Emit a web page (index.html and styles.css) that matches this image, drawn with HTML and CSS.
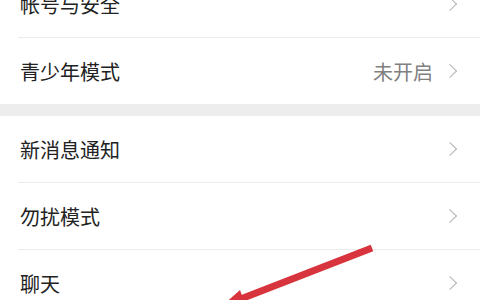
FILE: index.html
```html
<!DOCTYPE html>
<html lang="zh-CN">
<head>
    <meta charset="UTF-8">
    <meta name="viewport" content="width=device-width, initial-scale=1.0">
    <title>设置</title>
    <link rel="stylesheet" href="styles.css">
</head>
<body>
    <div class="settings">
        <div class="group">
            <div class="row">
                <span class="label">帐号与安全</span>
                <span class="chevron"></span>
            </div>
            <div class="row">
                <span class="label">青少年模式</span>
                <span class="value">未开启</span>
                <span class="chevron"></span>
            </div>
        </div>
        <div class="group">
            <div class="row">
                <span class="label">新消息通知</span>
                <span class="chevron"></span>
            </div>
            <div class="row">
                <span class="label">勿扰模式</span>
                <span class="chevron"></span>
            </div>
            <div class="row">
                <span class="label">聊天</span>
                <span class="chevron"></span>
            </div>
        </div>
    </div>

    <!-- red annotation arrow drawn over the list -->
    <svg class="annotation" width="480" height="300" viewBox="0 0 480 300">
        <line x1="372" y1="248" x2="238" y2="300" stroke="#d8343d" stroke-width="7" stroke-linecap="butt"/>
        <polygon points="222,306 240,290 248,312" fill="#d8343d"/>
    </svg>
</body>
</html>
```

FILE: styles.css
```css
body {
    margin: 0;
    background: #ededed;
    font-family: "Noto Sans CJK SC", "Noto Sans", sans-serif;
    overflow: hidden;
}
.settings {
    margin-top: -29px;
}
.group {
    background: #fff;
    margin-bottom: 12px;
}
.row {
    display: flex;
    align-items: center;
    height: 66px;
    margin-left: 18px;
    padding-right: 22px;
    border-bottom: 1px solid #ececec;
}
.row:last-child {
    border-bottom: none;
}
.label {
    flex: 1;
    padding-left: 2px;
    font-size: 20px;
    color: #222;
}
.value {
    font-size: 20px;
    color: #808080;
    margin-right: 12px;
}
.chevron {
    width: 9px;
    height: 9px;
    border-top: 1.6px solid #b4b4b4;
    border-right: 1.6px solid #b4b4b4;
    transform: rotate(45deg);
    margin-right: 3px;
}
.annotation {
    position: absolute;
    left: 0;
    top: 0;
}
```
